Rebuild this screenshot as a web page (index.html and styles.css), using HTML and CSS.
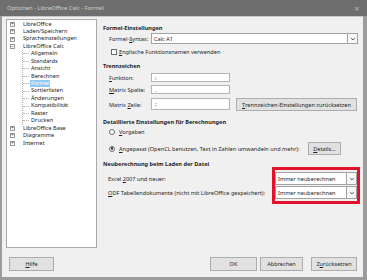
FILE: index.html
```html
<!DOCTYPE html>
<html lang="de">
<head>
<meta charset="utf-8">
<title>Optionen - LibreOffice Calc - Formel</title>
<link rel="stylesheet" href="styles.css">
</head>
<body>
<div class="window">
  <div class="titlebar">
    <span class="title">Optionen - LibreOffice Calc - Formel</span>
    <span class="close">×</span>
  </div>
  <div class="client">
    <div class="main">
      <div class="tree">
        <div class="node"><span class="exp">+</span><span class="lbl">LibreOffice</span></div>
        <div class="node"><span class="exp">+</span><span class="lbl">Laden/Speichern</span></div>
        <div class="node"><span class="exp">+</span><span class="lbl">Spracheinstellungen</span></div>
        <div class="node"><span class="exp">−</span><span class="lbl">LibreOffice Calc</span></div>
        <div class="children">
          <div class="child"><span class="lbl">Allgemein</span></div>
          <div class="child"><span class="lbl">Standards</span></div>
          <div class="child"><span class="lbl">Ansicht</span></div>
          <div class="child"><span class="lbl">Berechnen</span></div>
          <div class="child"><span class="lbl sel">Formel</span></div>
          <div class="child"><span class="lbl">Sortierlisten</span></div>
          <div class="child"><span class="lbl">Änderungen</span></div>
          <div class="child"><span class="lbl">Kompatibilität</span></div>
          <div class="child"><span class="lbl">Raster</span></div>
          <div class="child last"><span class="lbl">Drucken</span></div>
        </div>
        <div class="node"><span class="exp">+</span><span class="lbl">LibreOffice Base</span></div>
        <div class="node"><span class="exp">+</span><span class="lbl">Diagramme</span></div>
        <div class="node"><span class="exp">+</span><span class="lbl">Internet</span></div>
      </div>

      <div class="content">
        <div class="heading h-first">Formel-Einstellungen</div>
        <div class="row r-syntax">
          <span class="label">Formel-<u>S</u>yntax:</span>
          <div class="select wide"><span class="val">Calc A1</span><span class="arrow"><svg viewBox="0 0 10 10" width="6" height="6"><polyline points="2,3.5 5,6.5 8,3.5" fill="none" stroke="#333" stroke-width="1.4"/></svg></span></div>
        </div>
        <div class="row r-check">
          <span class="checkbox"></span><span class="text"><u>E</u>nglische Funktionsnamen verwenden</span>
        </div>

        <div class="heading h-sep">Trennzeichen</div>
        <div class="row r-field">
          <span class="label"><u>F</u>unktion:</span>
          <span class="input">;</span>
        </div>
        <div class="row r-field">
          <span class="label"><u>M</u>atrix Spalte:</span>
          <span class="input">.</span>
        </div>
        <div class="row r-field r-zeile">
          <span class="label">Matrix <u>Z</u>eile:</span>
          <span class="input">;</span>
          <span class="button reset"><u>T</u>rennzeichen-Einstellungen zurücksetzen</span>
        </div>

        <div class="heading h-detail">Detaillierte Einstellungen für Berechnungen</div>
        <div class="row r-radio1">
          <span class="radio"></span><span class="text"><u>V</u>orgaben</span>
        </div>
        <div class="row r-radio2">
          <span class="radio on"></span><span class="text"><u>A</u>ngepasst (OpenCL benutzen, Text in Zahlen umwandeln und mehr):</span>
          <span class="button details"><u>D</u>etails...</span>
        </div>

        <div class="heading h-load">Neuberechnung beim Laden der Datei</div>
        <div class="row r-load r-excel">
          <span class="label">Excel <u>2</u>007 und neuer:</span>
          <div class="select narrow"><span class="val">Immer neuberechnen</span><span class="arrow"><svg viewBox="0 0 10 10" width="6" height="6"><polyline points="2,3.5 5,6.5 8,3.5" fill="none" stroke="#333" stroke-width="1.4"/></svg></span></div>
        </div>
        <div class="row r-load r-odf">
          <span class="label"><u>O</u>DF Tabellendokumente (nicht mit LibreOffice gespeichert):</span>
          <div class="select narrow"><span class="val">Immer neuberechnen</span><span class="arrow"><svg viewBox="0 0 10 10" width="6" height="6"><polyline points="2,3.5 5,6.5 8,3.5" fill="none" stroke="#333" stroke-width="1.4"/></svg></span></div>
        </div>
        <div class="highlight"></div>
      </div>
    </div>
    <div class="footer">
      <span class="button b-help"><u>H</u>ilfe</span>
      <span class="spacer"></span>
      <span class="button b-ok">OK</span>
      <span class="button b-cancel">Abbrechen</span>
      <span class="button b-reset">Z<u>u</u>rücksetzen</span>
    </div>
  </div>
</div>
</body>
</html>
```

FILE: styles.css
```css
* { box-sizing: border-box; }
html, body { margin: 0; padding: 0; }
body {
  width: 367px;
  height: 280px;
  overflow: hidden;
  font-family: "Noto Sans", "Open Sans", sans-serif;
  font-size: 5.6px;
  color: #1e1e1e;
}
u { text-decoration: underline; text-underline-offset: 1px; text-decoration-thickness: 0.5px; }

.window {
  width: 367px;
  height: 280px;
  background: #9c9c9c;
  display: flex;
  flex-direction: column;
  padding: 0 4px 3px 2px;
}
.titlebar {
  height: 16px;
  flex: none;
  display: flex;
  align-items: center;
  justify-content: space-between;
  background: #6e6e6e;
  margin: 0 -4px 0 -2px;
  padding: 0 8px 0 7px;
  color: #cfcfcf;
}
.title { font-size: 5.8px; }
.close { font-size: 8px; color: #bdbdbd; }

.client {
  flex: 1;
  background: #f0f0f0;
  display: flex;
  flex-direction: column;
  border-top: 1px solid #c8c8c8;
}
.main {
  display: flex;
  height: 232px;
}
.tree {
  margin: 2px 0 0 4px;
  width: 91px;
  height: 229px;
  flex: none;
  background: #fff;
  border: 1px solid #a9a9a9;
  padding-top: 0.5px;
  line-height: 7.45px;
}
.node, .child {
  height: 7.45px;
  display: flex;
  align-items: center;
  white-space: nowrap;
}
.node { padding-left: 3px; }
.exp {
  width: 5px;
  height: 5px;
  border: 0.6px solid #9a9a9a;
  font-size: 5px;
  line-height: 3.6px;
  text-align: center;
  color: #444;
  margin-right: 7px;
  flex: none;
}
.children {
  margin-left: 15px;
  border-left: 0.6px dotted #b0b0b0;
}
.child::before {
  content: "";
  width: 6px;
  border-top: 0.6px dotted #b0b0b0;
  margin-right: 1px;
  flex: none;
}
.lbl { padding: 0 1px; }
.sel {
  background: #8fcaf4;
  color: #fff;
  width: 20px;
  height: 7px;
  line-height: 7px;
}

.content {
  position: relative;
  flex: 1;
  padding: 8px 0 0 6px;
  display: flex;
  flex-direction: column;
}
.heading {
  font-weight: bold;
  height: 7px;
  line-height: 7px;
  white-space: nowrap;
}
.h-sep { margin-top: 7px; }
.h-detail { margin-top: 8px; }
.h-load { margin-top: 6px; }

.row {
  display: flex;
  align-items: center;
  white-space: nowrap;
}
.label {
  padding-left: 6px;
  width: 48px;
  flex: none;
}
.r-syntax { height: 11px; margin-top: 1px; }
.r-check { height: 8px; margin-top: 4px; padding-left: 8px; }
.r-field { height: 9px; margin-top: 3px; }
.r-zeile { height: 13px; margin-top: 4px; }
.r-radio1 { height: 8px; margin-top: 2px; padding-left: 6px; }
.r-radio2 { height: 13px; margin-top: 6px; padding-left: 6px; }
.r-load { height: 13px; }
.r-excel { margin-top: 4px; }
.r-odf { margin-top: 1px; }
.r-load .label { width: 172px; padding-left: 5px; }

.select {
  height: 100%;
  background: #fff;
  border: 1px solid #a3a3a3;
  display: flex;
  align-items: center;
  padding-left: 2px;
}
.select .val { flex: 1; }
.select .arrow {
  width: 10px;
  height: 100%;
  border-left: 1px solid #a3a3a3;
  display: flex;
  align-items: center;
  justify-content: center;
  background: #f7f7f7;
}
.wide { width: 207px; }
.narrow { width: 82px; }

.checkbox {
  width: 6px;
  height: 6px;
  border: 0.8px solid #6a6a6a;
  background: #fff;
  margin-right: 2px;
  flex: none;
}
.radio {
  width: 6px;
  height: 6px;
  border: 0.8px solid #6a6a6a;
  border-radius: 50%;
  background: #fff;
  margin-right: 4px;
  flex: none;
  display: flex;
  align-items: center;
  justify-content: center;
}
.radio.on::after {
  content: "";
  width: 2.6px;
  height: 2.6px;
  border-radius: 50%;
  background: #333;
}

.input {
  width: 79px;
  height: 100%;
  background: #fff;
  border: 1px solid #b4b4b4;
  padding-left: 3px;
  display: flex;
  align-items: center;
}
.r-zeile .input { height: 12px; align-self: flex-start; }

.button {
  background: #e1e1e1;
  border: 1px solid #adadad;
  display: flex;
  align-items: center;
  justify-content: center;
  height: 100%;
  flex: none;
}
.reset { width: 121px; margin-left: 6px; }
.details { width: 33px; margin-left: auto; margin-right: 22px; }

.highlight {
  position: absolute;
  left: 175px;
  top: 150px;
  width: 88px;
  height: 37px;
  border: 3px solid #e3122c;
}

.footer {
  display: flex;
  align-items: center;
  padding: 0 6px 0 7px;
  margin-top: 8px;
  height: 14px;
}
.footer .button { height: 14px; }
.spacer { flex: 1; }
.b-help { width: 45px; }
.b-ok { width: 47px; }
.b-cancel { width: 43px; margin-left: 3px; }
.b-reset { width: 46px; margin-left: 8px; }
```
